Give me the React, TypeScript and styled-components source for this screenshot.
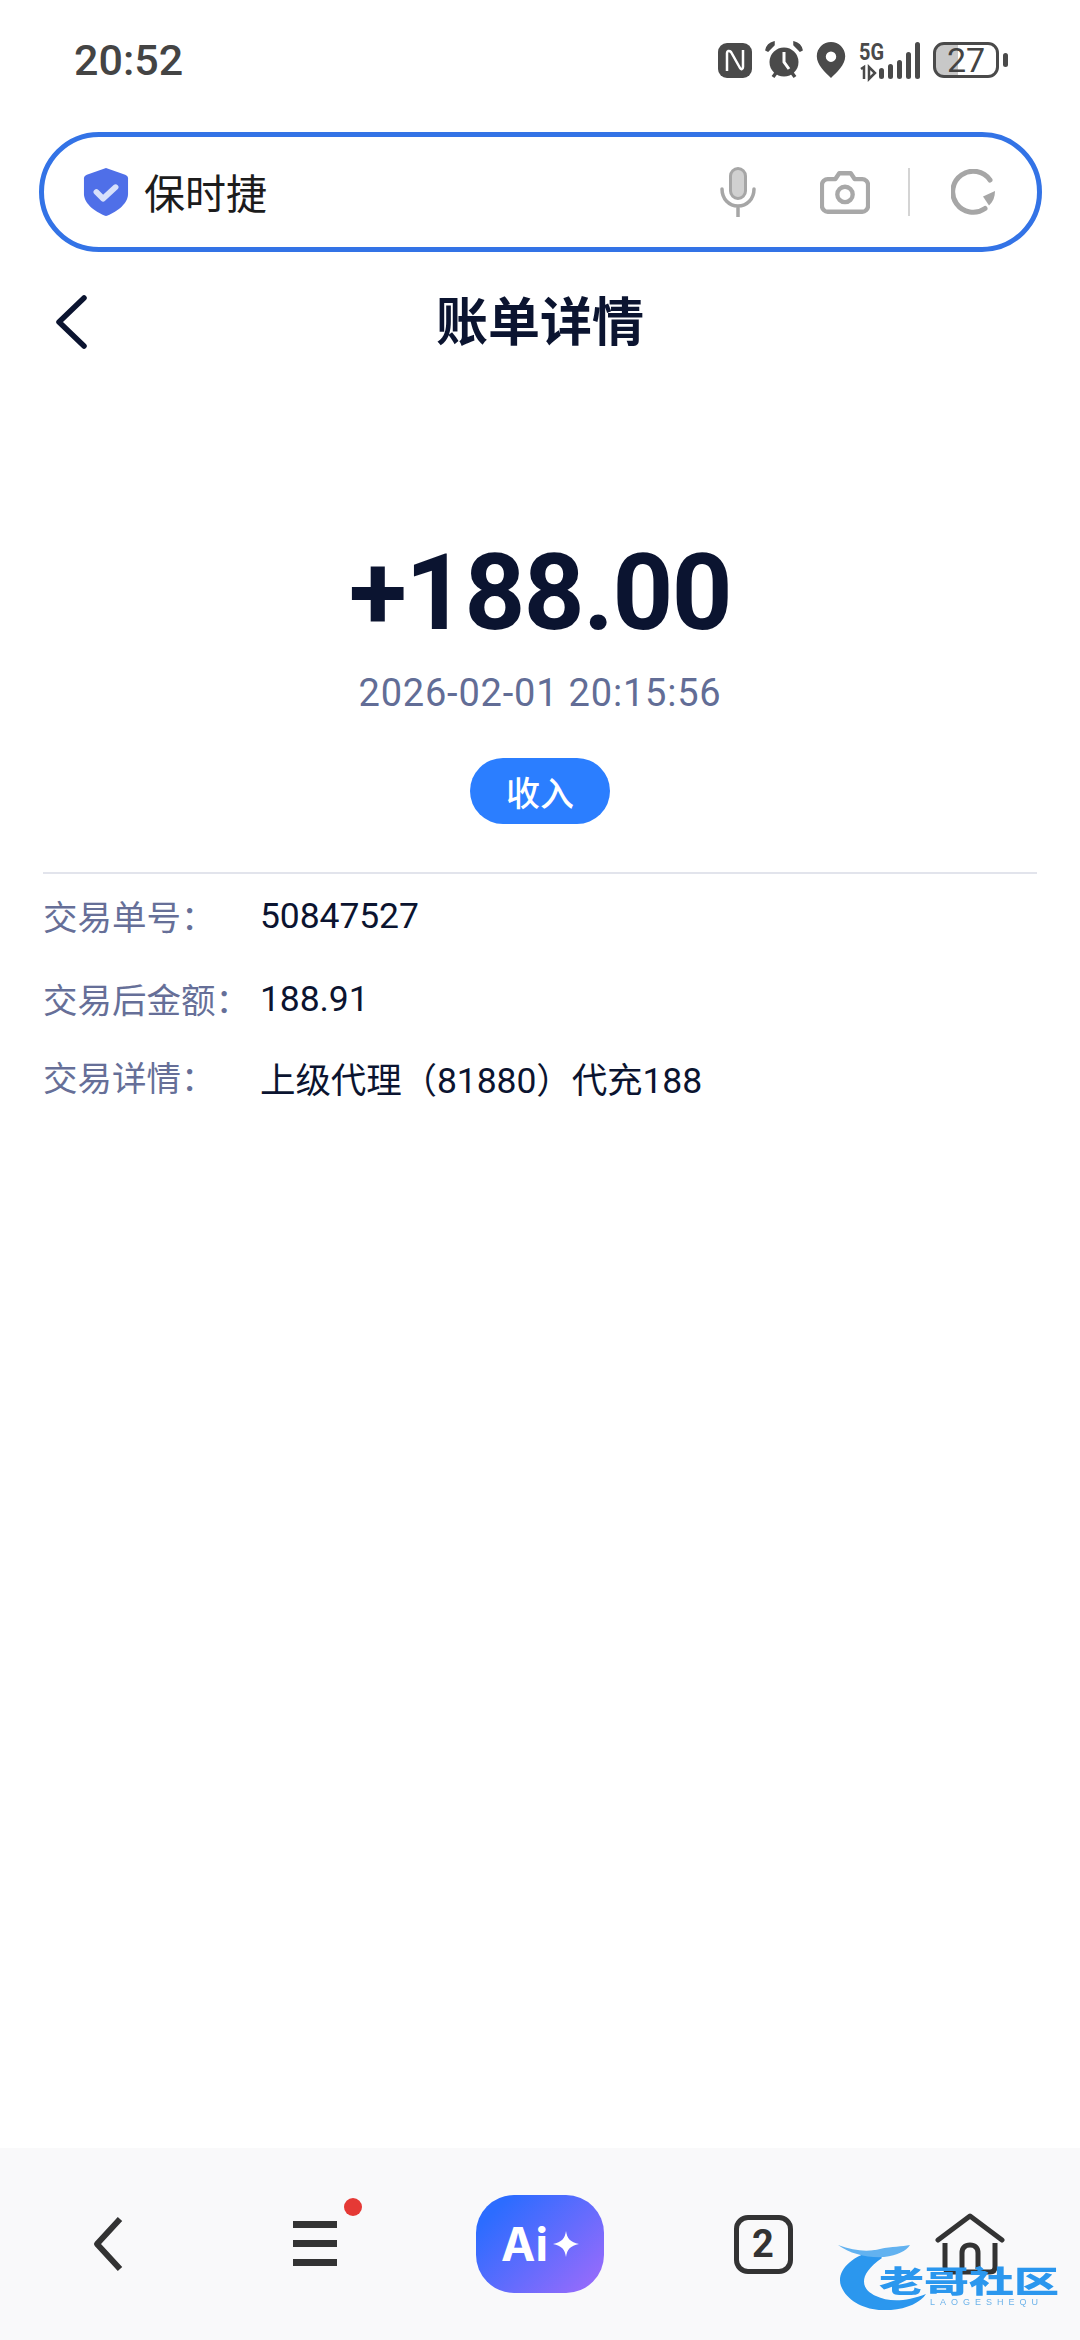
import React from "react";
import styled, { createGlobalStyle } from "styled-components";

const Global = createGlobalStyle`
  html, body { margin: 0; padding: 0; background: #fff; }
  * { box-sizing: border-box; }
  body { font-family: Roboto, "Noto Sans CJK SC", sans-serif; }
`;
const Page = styled.div`
  width: 1080px; height: 2340px; display: flex; flex-direction: column; background: #fff; overflow: hidden; position: relative;
`;
const StatusBar = styled.div`
  height: 120px; padding: 0 72px 0 74px; display: flex; align-items: center; justify-content: space-between; flex: none;
`;
const Time = styled.div`
  font-size: 43px; font-weight: 500; color: #444; line-height: 1;
`;
const StatusIcons = styled.div`
  display: flex; align-items: center; gap: 13px; color: #4a4a4a;
`;
const BatteryBox = styled.div`
  display: flex; align-items: center; gap: 4px;
`;
const Battery = styled.div`
  width: 66px; height: 36px; border: 3.5px solid #4a4a4a; border-radius: 11px;
  display: flex; align-items: center; justify-content: center; font-size: 34px; line-height: 29px; color: #444;
  background: linear-gradient(90deg, #c8c8c8 0 22px, transparent 22px);
`;
const BatteryTip = styled.div`
  width: 5px; height: 14px; background: #4a4a4a; border-radius: 3px;
`;
const SearchBar = styled.div`
  margin: 12px 38px 0 39px; height: 120px; border: 5px solid #3373e6; border-radius: 60px; flex: none;
  display: flex; align-items: center; padding: 0 40px 0 39px;
`;
const SearchText = styled.div`
  font-size: 41px; color: #1c1c1c; margin: 0 0 2px 15px; flex: 1; line-height: 1; font-family: "Noto Sans CJK SC", sans-serif;
`;
const SearchActions = styled.div`
  display: flex; align-items: center;
`;
const SearchDivider = styled.div`
  width: 2px; height: 48px; background: #d4d4d4; margin: 0 41px 0 38px;
`;
const Header = styled.div`
  height: 90px; margin-top: 25px; display: flex; align-items: center; justify-content: center; position: relative; flex: none;
`;
const HeaderBack = styled.svg`
  position: absolute; left: 53px; top: 17px;
`;
const Title = styled.h1`
  margin: 0 0 6px; font-size: 52px; font-weight: 700; color: #0b1430; line-height: 1; font-family: "Noto Sans CJK SC", sans-serif;
`;
const Hero = styled.div`
  display: flex; flex-direction: column; align-items: center; flex: none; padding-top: 166px;
`;
const Amount = styled.div`
  font-size: 106px; font-weight: 700; color: #0b1430; line-height: 120px; letter-spacing: -1.500px;
`;
const DateText = styled.div`
  font-size: 38px; color: #626d96; line-height: 44px; margin-top: 18px; letter-spacing: 0.8px;
`;
const Pill = styled.div`
  width: 140px; height: 66px; border-radius: 33px; background: #2b7eff; color: #fff; margin-top: 43px;
  font-size: 34px; font-weight: 500; display: flex; align-items: center; justify-content: center; font-family: "Noto Sans CJK SC", sans-serif;
`;
const Divider = styled.div`
  height: 2px; background: #e2e4ec; margin: 48px 43px 0; flex: none;
`;
const Details = styled.div`
  padding: 0 43px; flex: none;
`;
const Row = styled.div<{ $top: number }>`
  display: flex; align-items: center; height: 44px; margin-top: ${(p) => p.$top}px;
`;
const Label = styled.div`
  width: 217px; color: #666f98; flex: none; font-size: 34.5px; line-height: 44px; margin-top: -2px; font-family: "Noto Sans CJK SC", sans-serif;
`;
const Value = styled.div`
  color: #0b1430; font-size: 35.5px; letter-spacing: -0.1px; font-family: Roboto, "Noto Sans CJK SC", sans-serif;
`;
const BottomBar = styled.div`
  margin-top: auto; height: 192px; background: #f9f9fa; flex: none; display: grid;
  grid-template-columns: 216px 198px 252px 194px 220px; align-items: center; justify-items: center;
`;
const NavItem = styled.div`
  position: relative; display: flex; align-items: center; justify-content: center;
`;
const RedDot = styled.span`
  position: absolute; top: -23px; right: -25px; width: 18px; height: 18px; border-radius: 50%; background: #e53935;
`;
const AiButton = styled.div`
  width: 128px; height: 98px; border-radius: 38px; background: linear-gradient(135deg, #2c6cff 15%, #a06bfb 100%);
  display: flex; align-items: center; justify-content: center; gap: 5px; color: #fff;
`;
const AiText = styled.span`
  font-size: 46px; font-weight: 700; line-height: 1; font-family: Inter, sans-serif;
`;
const CountBox = styled.div`
  width: 59px; height: 59px; border: 5px solid #333; border-radius: 14px; display: flex; align-items: center; justify-content: center;
  font-size: 38px; font-weight: 700; color: #333; line-height: 1;
`;
const Watermark = styled.div`
  position: absolute; left: 838px; bottom: 30px; width: 226px; height: 68px; filter: blur(0.7px);
`;
const WatermarkTitle = styled.div`
  position: absolute; left: 41px; top: 22px; font-size: 30px; font-weight: 900; line-height: 1; color: #2b97ee;
  font-family: "Noto Sans CJK SC", sans-serif; white-space: nowrap; transform-origin: left; transform: scaleX(1.5);
`;
const WatermarkSub = styled.div`
  position: absolute; left: 92px; top: 56px; font-size: 9px; line-height: 1; letter-spacing: 5px; color: #6db3ea; white-space: nowrap;
  font-family: "Liberation Sans", sans-serif;
`;
const WatermarkArt = styled.svg`
  position: absolute; left: 0; top: 0;
`;
const SignalSvg = styled.svg`
  overflow: visible;
`;
const CameraIcon = styled.svg`
  margin-left: 64px;
`;

const NfcIcon = () => (
  <svg width="34" height="35" viewBox="0 0 34 35"><rect width="34" height="35" rx="9" fill="#4a4a4a" /><path d="M9 28V10c0-2 2-3 4-1l9 16c1 2 3 1 3-1V7" fill="none" stroke="#fff" strokeWidth="2.500" /></svg>
);
const AlarmIcon = () => (
  <svg width="38" height="38" viewBox="0 0 38 38"><circle cx="19" cy="21" r="14.500" fill="#4a4a4a" /><path d="M19 11v10l5 7" fill="none" stroke="#fff" strokeWidth="3" /><path d="M1 9c1-5 4-7 8-8v3L3 10zM37 9c-1-5-4-7-8-8v3l6 6z" fill="#4a4a4a" stroke="#4a4a4a" strokeWidth="1.500" /><path d="M8 36l3-4M30 36l-3-4" stroke="#4a4a4a" strokeWidth="3.500" /></svg>
);
const PinIcon = () => (
  <svg width="30" height="36" viewBox="0 0 30 38"><path fillRule="evenodd" d="M15 0C7 0 0 6.500 0 15c0 9 9 17 15 23 6-6 15-14 15-23C30 6.500 23 0 15 0zm0 10a5.500 5.500 0 1 1 0 11 5.500 5.500 0 0 1 0-11z" fill="#4a4a4a" /></svg>
);
const SignalIcon = () => (
  <SignalSvg width="61" height="37" viewBox="0 0 61 37">
    <text x="0" y="18" fontSize="23" fontWeight="700" fontFamily="Roboto" fill="#4a4a4a" textLength="25" lengthAdjust="spacingAndGlyphs">5G</text>
    <path d="M2 27l3-2v12M10 25v12l6-6z" fill="none" stroke="#4a4a4a" strokeWidth="2.500" />
    {[[20, 11], [29, 15], [38, 19], [47, 27], [56, 37]].map(([x, h]) => (
      <rect key={x} x={x} y={37 - h} width="5" height={h} rx="2.500" fill="#4a4a4a" />
    ))}
  </SignalSvg>
);
const Shield = () => (
  <svg width="46" height="50" viewBox="0 0 48 50"><path d="M24 0l20 7c2 1 3 2 3 4v16c0 11-14 20-23 23C15 47 1 38 1 27V11c0-2 1-3 3-4z" fill="#4f6fe8" /><path d="M14 25l7 7 13-12" fill="none" stroke="#d7e0fb" strokeWidth="6" strokeLinecap="round" strokeLinejoin="round" /></svg>
);
const Mic = () => (
  <svg width="36" height="50" viewBox="0 0 36 50" fill="none"><rect x="10.500" y="1.500" width="15" height="30" rx="7.500" fill="#d0d0d0" stroke="#a6a6a6" strokeWidth="3" /><path d="M2 22c0 10 7 17 16 17s16-7 16-17M18 39v11" stroke="#a6a6a6" strokeWidth="3.500" strokeLinecap="round" /></svg>
);
const Camera = () => (
  <CameraIcon width="50" height="43" viewBox="0 0 52 44" fill="none"><path d="M8 8h8l4-6h12l4 6h8c3 0 6 3 6 6v22c0 3-3 6-6 6H8c-3 0-6-3-6-6V14c0-3 3-6 6-6z" stroke="#a8a8a8" strokeWidth="4.500" strokeLinejoin="round" /><circle cx="26" cy="24" r="8" stroke="#a8a8a8" strokeWidth="4.500" /></CameraIcon>
);
const Reload = () => (
  <svg width="46" height="46" viewBox="0 0 46 46" fill="none"><path d="M34 39.500A20.500 20.500 0 1 1 39 11" stroke="#a6a6a6" strokeWidth="5" strokeLinecap="round" /><path d="M44 22c0 6-2 11-6 14.500l-6-9z" fill="#a6a6a6" /></svg>
);

export default function App() {
  return (
    <Page>
      <Global />
      <StatusBar>
        <Time>20:52</Time>
        <StatusIcons>
          <NfcIcon />
          <AlarmIcon />
          <PinIcon />
          <SignalIcon />
          <BatteryBox>
            <Battery>27</Battery>
            <BatteryTip />
          </BatteryBox>
        </StatusIcons>
      </StatusBar>
      <SearchBar>
        <Shield />
        <SearchText>保时捷</SearchText>
        <SearchActions>
          <Mic />
          <Camera />
          <SearchDivider />
          <Reload />
        </SearchActions>
      </SearchBar>
      <Header>
        <HeaderBack width="36" height="56" viewBox="0 0 36 56" fill="none"><path d="M31 4L6 28l25 24" stroke="#0b1430" strokeWidth="5.500" strokeLinecap="round" strokeLinejoin="round" /></HeaderBack>
        <Title>账单详情</Title>
      </Header>
      <Hero>
        <Amount>+188.00</Amount>
        <DateText>2026-02-01 20:15:56</DateText>
        <Pill>收入</Pill>
      </Hero>
      <Divider />
      <Details>
        <Row $top={20}><Label>交易单号：</Label><Value>50847527</Value></Row>
        <Row $top={39}><Label>交易后金额：</Label><Value>188.91</Value></Row>
        <Row $top={34}><Label>交易详情：</Label><Value>上级代理（81880）代充188</Value></Row>
      </Details>
      <BottomBar>
        <NavItem>
          <svg width="36" height="56" viewBox="0 0 36 56" fill="none"><path d="M30 3L7 28l23 25" stroke="#333" strokeWidth="6" strokeLinejoin="round" /></svg>
        </NavItem>
        <NavItem>
          <svg width="44" height="46" viewBox="0 0 44 46"><rect y="0" width="44" height="7" fill="#333" /><rect y="19" width="44" height="7" fill="#333" /><rect y="38" width="44" height="7" fill="#333" /></svg>
          <RedDot />
        </NavItem>
        <AiButton>
          <AiText>Ai</AiText>
          <svg width="26" height="26" viewBox="0 0 24 32" preserveAspectRatio="none"><path d="M12 0c1 9 4 14 12 16-8 2-11 7-12 16C11 23 8 18 0 16 8 14 11 9 12 0z" fill="#fff" /></svg>
        </AiButton>
        <CountBox>2</CountBox>
        <NavItem>
          <svg width="70" height="62" viewBox="0 0 70 62" fill="none"><path d="M3 27L35 3l32 24" stroke="#333" strokeWidth="5" strokeLinejoin="round" strokeLinecap="round" /><path d="M10 30v24q0 5 5 5h40q5 0 5-5V30" stroke="#333" strokeWidth="5" /><path d="M27 56V40c0-5 3-8 8-8s8 3 8 8v16" stroke="#333" strokeWidth="5" /></svg>
        </NavItem>
      </BottomBar>
      <Watermark>
        <WatermarkArt width="100" height="68" viewBox="0 0 100 68" fill="none">
          <path d="M38 8C12 14-2 30 3 44c7 18 30 26 50 24 16-1 30-8 35-16-20 8-38 8-50 2C24 48 18 34 44 16z" fill="#2b97ee" />
          <path d="M0 3c16 6 30 7 42 4 12-3 22-2 30-4-4 6-12 10-26 12C30 16 12 12 0 3z" fill="#62b2f0" />
        </WatermarkArt>
        <WatermarkTitle>老哥社区</WatermarkTitle>
        <WatermarkSub>LAOGESHEQU</WatermarkSub>
      </Watermark>
    </Page>
  );
}
